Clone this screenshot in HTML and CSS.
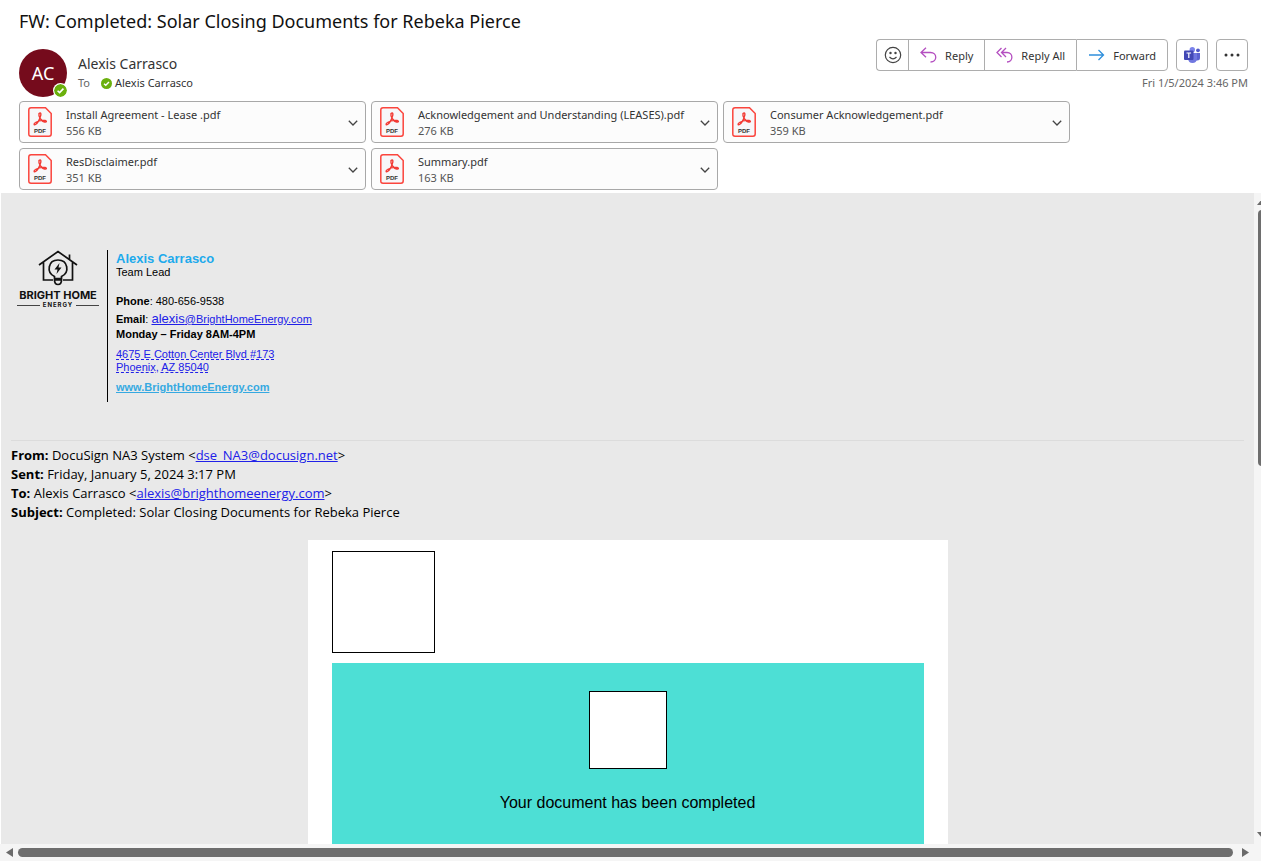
FILE: index.html
```html
<!DOCTYPE html>
<html lang="en">
	<head>
		<meta charset="UTF-8">
		<meta name="viewport" content="width=device-width, initial-scale=1.0">
		<title>FW: Completed: Solar Closing Documents for Rebeka Pierce</title>
		<link rel="stylesheet" href="styles.css">
	</head>
	<body>
		<!-- shapes used more than once -->
		<svg class="defs">
			<symbol id="pdf" viewBox="0 0 24 30">
				<path d="M3 .8h14.500l5.700 5.700V27q0 2.200-2.200 2.200H3Q.8 29.200.8 27V3Q.8.8 3 .8z" fill="#f7f7f9" stroke="#fb453d" stroke-width="1.500"/>
				<path d="M11 6.500c1.800-1.600 2.600.5 1.200 3.800-1 3-3 6.200-4.700 7.200-1.500.8-2.200-.8 0-2 2.500-1.500 6.500-2.300 9.500-2 2.200.3 1.600 2-.4 1.500-3-.8-6.500-5-5.600-8.500z" fill="none" stroke="#f23a34" stroke-width="1.400"/>
			</symbol>
			<symbol id="chevron" viewBox="0 0 10 6">
				<path d="M.8.8L5 5 9.200.8" fill="none" stroke="#444" stroke-width="1.300"/>
			</symbol>
			<symbol id="check" viewBox="0 0 12 12">
				<circle cx="6" cy="6" r="6" fill="#6bb00d"/>
				<path d="M3.300 6.200l1.900 1.800 3.500-3.700" fill="none" stroke="#fff" stroke-width="1.500"/>
			</symbol>
		</svg>

		<header class="header">
			<h1 class="subject">FW: Completed: Solar Closing Documents for Rebeka Pierce</h1>
			<div class="top-row">
				<div class="avatar">AC
					<svg class="presence"><use href="#check"/></svg>
				</div>
				<div class="people">
					<div class="sender">Alexis Carrasco</div>
					<div class="to-line"><span class="to">To</span><svg class="check"><use href="#check"/></svg>Alexis Carrasco</div>
				</div>
				<div class="actions">
					<div class="toolbar">
						<div class="group">
							<button class="icon-btn" aria-label="React">
								<svg width="18" height="18" viewBox="0 0 18 18" fill="none" stroke="#444" stroke-width="1.200"><circle cx="9" cy="9" r="7.700"/><path d="M5.500 11q3.500 3.600 7 0"/><circle cx="6.500" cy="7" r=".6" fill="#444"/><circle cx="11.500" cy="7" r=".6" fill="#444"/></svg>
							</button>
							<button class="text-btn">
								<svg width="17" height="16" viewBox="0 0 17 16" fill="none" stroke="#b44fc0" stroke-width="1.300"><path d="M6 .8L1 5.500l5 4.700M1 5.500h9.500c7 0 7 9.500 0 9.500"/></svg>
								Reply
							</button>
							<button class="text-btn">
								<svg width="17" height="16" viewBox="0 0 17 16" fill="none" stroke="#b44fc0" stroke-width="1.300"><path d="M5.500 1L1 5.500 5.500 10M10 1L5.500 5.500 10 10M5.500 5.500H11c6.500 0 6.500 9.500 0 9.500"/></svg>
								Reply All
							</button>
							<button class="text-btn">
								<svg width="17" height="16" viewBox="0 0 17 16" fill="none" stroke="#2f8fdc" stroke-width="1.300"><path d="M1 8h14.500M10.500 3l5 5-5 5"/></svg>
								Forward
							</button>
						</div>
						<button class="icon-btn boxed" aria-label="Share to Teams">
							<svg width="18" height="16" viewBox="0 0 18 16"><circle cx="15" cy="3.300" r="1.900" fill="#5059c9"/><path d="M10 6h7v5q0 2.500-3 2.500h-2z" fill="#5b62d0"/><circle cx="9.300" cy="2.700" r="2.700" fill="#7b83eb"/><path d="M5 6h9v5.500Q13.500 16 9.500 16T5 11.500z" fill="#7077e0"/><rect x="1" y="3.500" width="9.500" height="9.500" rx="1" fill="#4248b5"/><path d="M3.500 6h4.600M5.800 6v5" stroke="#fff" stroke-width="1.200"/></svg>
						</button>
						<button class="icon-btn boxed" aria-label="More actions">
							<svg width="16" height="4" viewBox="0 0 16 4" fill="#333"><circle cx="2" cy="2" r="1.500"/><circle cx="8" cy="2" r="1.500"/><circle cx="14" cy="2" r="1.500"/></svg>
						</button>
					</div>
					<div class="date">Fri 1/5/2024 3:46 PM</div>
				</div>
			</div>

			<div class="attachments">
				<button class="file">
					<svg class="pdf"><use href="#pdf"/><text x="12" y="26">PDF</text></svg>
					<span class="file-text">Install Agreement - Lease .pdf<span class="size">556 KB</span></span>
					<svg class="chevron"><use href="#chevron"/></svg>
				</button>
				<button class="file">
					<svg class="pdf"><use href="#pdf"/><text x="12" y="26">PDF</text></svg>
					<span class="file-text">Acknowledgement and Understanding (LEASES).pdf<span class="size">276 KB</span></span>
					<svg class="chevron"><use href="#chevron"/></svg>
				</button>
				<button class="file">
					<svg class="pdf"><use href="#pdf"/><text x="12" y="26">PDF</text></svg>
					<span class="file-text">Consumer Acknowledgement.pdf<span class="size">359 KB</span></span>
					<svg class="chevron"><use href="#chevron"/></svg>
				</button>
				<button class="file">
					<svg class="pdf"><use href="#pdf"/><text x="12" y="26">PDF</text></svg>
					<span class="file-text">ResDisclaimer.pdf<span class="size">351 KB</span></span>
					<svg class="chevron"><use href="#chevron"/></svg>
				</button>
				<button class="file">
					<svg class="pdf"><use href="#pdf"/><text x="12" y="26">PDF</text></svg>
					<span class="file-text">Summary.pdf<span class="size">163 KB</span></span>
					<svg class="chevron"><use href="#chevron"/></svg>
				</button>
			</div>
		</header>

		<div class="reader">
			<main class="message">
				<div class="signature">
					<div class="logo">
						<svg width="40" height="37" viewBox="0 0 40 37" fill="none" stroke="#111" stroke-width="1.700">
							<path d="M1 15L20 1.500 39 15M5.500 12v18H15M34.500 12v18H25M31.500 9V4.500"/>
							<path d="M16.500 30v-3.500c-8.500-4-6.500-16.500 3.500-16.500s12 12.500 3.500 16.500V30M16.500 28.500h7M16.500 30c0 6 7 6 7 0z"/>
							<path d="M21.500 13l-5 6.500h3L18.500 24l5-6.500h-3z" fill="#111" stroke="none"/>
						</svg>
						<div class="logo-name">BRIGHT HOME</div>
						<div class="logo-sub">ENERGY</div>
					</div>
					<div class="contact">
						<div class="contact-name">Alexis Carrasco</div>
						<div class="role">Team Lead</div>
						<div class="phone"><b>Phone</b>: 480-656-9538</div>
						<div class="email"><b>Email</b>: <a href="#"><span class="big">alexis</span>@BrightHomeEnergy.com</a></div>
						<div class="hours"><b>Monday – Friday 8AM-4PM</b></div>
						<div class="address"><a href="#">4675 E Cotton Center Blvd #173<br>Phoenix, AZ 85040</a></div>
						<a class="site" href="#">www.BrightHomeEnergy.com</a>
					</div>
				</div>

				<div class="forwarded">
					<div><b>From:</b> DocuSign NA3 System &lt;<a href="#">dse_NA3@docusign.net</a>&gt;</div>
					<div><b>Sent:</b> Friday, January 5, 2024 3:17 PM</div>
					<div><b>To:</b> Alexis Carrasco &lt;<a href="#">alexis@brighthomeenergy.com</a>&gt;</div>
					<div><b>Subject:</b> Completed: Solar Closing Documents for Rebeka Pierce</div>
				</div>

				<div class="docusign">
					<div class="blank-logo"></div>
					<div class="banner">
						<div class="blank-icon"></div>
						<div>Your document has been completed</div>
					</div>
				</div>
			</main>

			<div class="v-scroll">
				<svg width="10" height="6" viewBox="0 0 10 6" fill="#6b6b6b"><path d="M5 0l5 6H0z"/></svg>
				<div class="v-thumb"></div>
				<svg width="10" height="6" viewBox="0 0 10 6" fill="#6b6b6b"><path d="M0 0h10L5 6z"/></svg>
			</div>
		</div>

		<div class="h-scroll">
			<svg width="7" height="9" viewBox="0 0 7 9" fill="#6b6b6b"><path d="M7 0v9L0 4.500z"/></svg>
			<div class="h-thumb"></div>
			<svg width="7" height="9" viewBox="0 0 7 9" fill="#6b6b6b"><path d="M0 0v9l7-4.500z"/></svg>
		</div>
	</body>
</html>
```

FILE: styles.css
```css
* {
	box-sizing: border-box;
}
body {
	margin: 0;
	height: 100vh;
	display: flex;
	flex-direction: column;
	overflow: hidden;
	background-color: white;
	font-family: "Noto Sans", "Open Sans", sans-serif;
	font-size: 11px;
	color: #333;
}
button {
	font: inherit;
	color: inherit;
	background-color: white;
	border: 1px solid #adadad;
	padding: 0;
}
.defs {
	position: absolute;
	width: 0;
	height: 0;
}

/* header */
.header {
	padding: 9px 13px 3px 19px;
}
.subject {
	margin: 0;
	font-size: 18px;
	font-weight: normal;
	line-height: 24px;
	color: #111;
}
.top-row {
	display: flex;
	height: 68px;
	padding-top: 6px;
}
.avatar {
	position: relative;
	width: 48px;
	height: 48px;
	margin-top: 10px;
	border-radius: 50%;
	background-color: #750b1c;
	color: white;
	font-size: 18px;
	line-height: 48px;
	text-align: center;
}
.presence {
	position: absolute;
	right: -1px;
	bottom: -1px;
	width: 15px;
	height: 15px;
	padding: 1px;
	border-radius: 50%;
	background-color: white;
}
.people {
	margin: 15px 0 0 11px;
}
.sender {
	font-size: 14px;
	line-height: 20px;
}
.to-line {
	display: flex;
	align-items: center;
	line-height: 18px;
}
.to {
	width: 23px;
	color: #666;
}
.check {
	width: 11px;
	height: 11px;
	margin-right: 3px;
}
.actions {
	margin-left: auto;
}
.toolbar {
	display: flex;
	gap: 8px;
}
.group {
	display: flex;
}
.group button {
	border-right-width: 0;
}
.group button:first-child {
	border-radius: 4px 0 0 4px;
}
.group button:last-child {
	border-right-width: 1px;
	border-radius: 0 4px 4px 0;
}
.icon-btn, .text-btn {
	display: flex;
	align-items: center;
	justify-content: center;
	height: 32px;
}
.icon-btn {
	width: 32px;
}
.text-btn {
	gap: 8px;
	padding: 0 11px;
}
.boxed {
	border-radius: 4px;
}
.date {
	margin-top: 3px;
	line-height: 18px;
	text-align: right;
	color: #666;
}

/* attachments */
.attachments {
	display: grid;
	grid-template-columns: repeat(auto-fill, 347px);
	gap: 5px;
}
.file {
	display: flex;
	align-items: center;
	height: 42px;
	padding: 2px 7px 0 8px;
	border-color: #a8a8a8;
	border-radius: 4px;
	background-color: #fcfcfc;
	text-align: left;
	line-height: 16px;
	white-space: nowrap;
}
.file svg {
	flex: none;
}
.pdf {
	width: 24px;
	height: 30px;
	margin: 0 14px 2px 0;
}
.pdf text {
	font: bold 6px "Liberation Sans", sans-serif;
	text-anchor: middle;
	fill: #333;
}
.file-text {
	flex: 1;
}
.size {
	display: block;
	color: #555;
}
.chevron {
	width: 10px;
	height: 6px;
}

/* message body */
.reader {
	flex: 1;
	display: flex;
	min-height: 0;
}
.message {
	flex: 1;
	margin-left: 1px;
	padding: 57px 10px 0;
	overflow: hidden;
	background-color: #e9e9e9;
	color: black;
}
a {
	color: #2020e8;
}
.signature {
	display: flex;
	height: 190px;
	font: 11px/13px "Liberation Sans", Arial, sans-serif;
}
.logo {
	width: 96px;
	padding: 0 8px 0 6px;
	color: #111;
}
.logo svg {
	display: block;
	margin: 0 auto;
}
.logo-name {
	font: bold 11px/16px Inter, sans-serif;
	text-align: center;
	white-space: nowrap;
}
.logo-sub {
	display: flex;
	align-items: center;
	gap: 3px;
	font: bold 6px/4px Inter, sans-serif;
	letter-spacing: 1px;
}
.logo-sub::before, .logo-sub::after {
	content: "";
	flex: 1;
	border-top: 1px solid #444;
}
.contact {
	height: 152px;
	padding-left: 8px;
	border-left: 1px solid black;
}
.contact-name {
	padding-top: 1px;
	font-size: 13px;
	font-weight: bold;
	line-height: 15px;
	color: #1daaec;
}
.phone {
	margin-top: 16px;
}
.email {
	margin-top: 2px;
	line-height: 18px;
}
.big {
	font-size: 13px;
}
.address {
	margin-top: 7px;
}
.address a {
	text-decoration-style: dashed;
}
.site {
	display: inline-block;
	margin-top: 7px;
	font-weight: bold;
	color: #36a9e1;
}
.forwarded {
	padding-top: 5px;
	border-top: 1px solid #dcdcdc;
	font-family: "Open Sans", "Noto Sans", sans-serif;
	font-size: 13px;
	line-height: 19px;
}
.docusign {
	width: 640px;
	margin: 18px auto 0;
	padding: 11px 24px 0;
	background-color: white;
}
.blank-logo {
	width: 103px;
	height: 102px;
	border: 1px solid black;
}
.banner {
	height: 240px;
	margin-top: 10px;
	padding-top: 28px;
	background-color: #4ddfd5;
	font: 16px/20px "Liberation Sans", Arial, sans-serif;
	text-align: center;
}
.blank-icon {
	width: 78px;
	height: 78px;
	margin: 0 auto 24px;
	border: 1px solid black;
	background-color: white;
}

/* scroll bars */
.v-scroll {
	display: flex;
	flex-direction: column;
	width: 7px;
	padding: 6px 0 6px 3px;
	overflow: hidden;
	background-color: #f5f5f5;
}
.v-scroll svg {
	flex: none;
}
.v-scroll svg:last-child {
	margin-top: auto;
}
.v-thumb {
	width: 9px;
	height: 40%;
	margin: 5px 0 0 1px;
	border-radius: 4px;
	background-color: #6e6e6e;
}
.h-scroll {
	display: flex;
	align-items: center;
	gap: 5px;
	height: 17px;
	padding: 0 12px 0 6px;
	background-color: #f5f5f5;
}
.h-scroll svg:last-child {
	margin-left: 4px;
}
.h-thumb {
	flex: 1;
	height: 9px;
	border-radius: 5px;
	background-color: #6e6e6e;
}
```
